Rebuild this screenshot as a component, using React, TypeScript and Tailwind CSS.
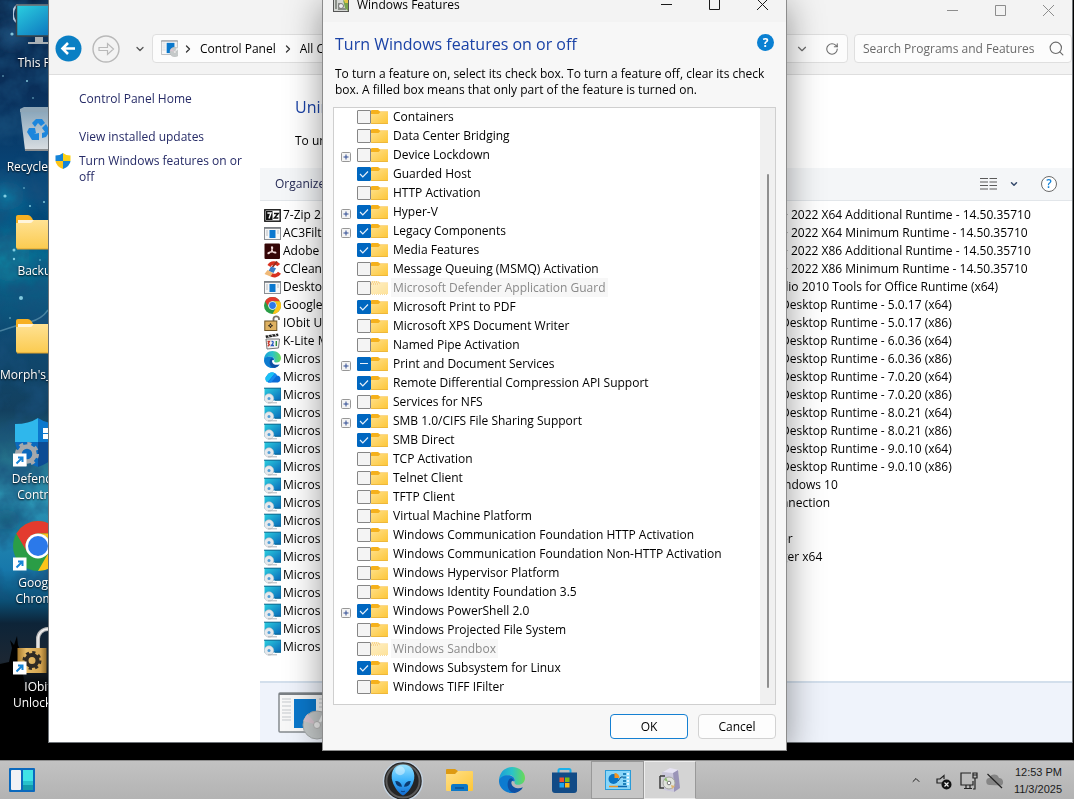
import { useEffect, useRef, type ReactNode } from "react";
import { ChevronDown, ChevronRight, ChevronUp, RotateCw, Search } from "lucide-react";

type State = "on" | "off" | "partial";
type Feature = { name: string; state: State; expandable?: boolean; disabled?: boolean };

const features: Feature[] = [
  { name: "Containers", state: "off" },
  { name: "Data Center Bridging", state: "off" },
  { name: "Device Lockdown", state: "off", expandable: true },
  { name: "Guarded Host", state: "on" },
  { name: "HTTP Activation", state: "off" },
  { name: "Hyper-V", state: "on", expandable: true },
  { name: "Legacy Components", state: "on", expandable: true },
  { name: "Media Features", state: "on" },
  { name: "Message Queuing (MSMQ) Activation", state: "off" },
  { name: "Microsoft Defender Application Guard", state: "off", disabled: true },
  { name: "Microsoft Print to PDF", state: "on" },
  { name: "Microsoft XPS Document Writer", state: "off" },
  { name: "Named Pipe Activation", state: "off" },
  { name: "Print and Document Services", state: "partial", expandable: true },
  { name: "Remote Differential Compression API Support", state: "on" },
  { name: "Services for NFS", state: "off", expandable: true },
  { name: "SMB 1.0/CIFS File Sharing Support", state: "on", expandable: true },
  { name: "SMB Direct", state: "on" },
  { name: "TCP Activation", state: "off" },
  { name: "Telnet Client", state: "off" },
  { name: "TFTP Client", state: "off" },
  { name: "Virtual Machine Platform", state: "off" },
  { name: "Windows Communication Foundation HTTP Activation", state: "off" },
  { name: "Windows Communication Foundation Non-HTTP Activation", state: "off" },
  { name: "Windows Hypervisor Platform", state: "off" },
  { name: "Windows Identity Foundation 3.5", state: "off" },
  { name: "Windows PowerShell 2.0", state: "on", expandable: true },
  { name: "Windows Projected File System", state: "off" },
  { name: "Windows Sandbox", state: "off", disabled: true },
  { name: "Windows Subsystem for Linux", state: "on" },
  { name: "Windows TIFF IFilter", state: "off" },
];

/* ---------- program icons (17 x 17) ---------- */

function ProgramIcon({ kind }: { kind: string }) {
  return (
    <svg viewBox="0 0 17 17" className="size-[17px] shrink-0" aria-hidden="true">
      {kind === "zip" && (
        <>
          <rect x="0.8" y="2.8" width="15.4" height="11.4" fill="#fff" stroke="#111" strokeWidth="1.4" />
          <rect x="2" y="4" width="6.5" height="9" fill="#111" />
          <path d="M3.4 6h3.6l-2 5.4" fill="none" stroke="#fff" strokeWidth="1.4" />
          <path d="M10 6.4h4.2L10.4 11h4" fill="none" stroke="#111" strokeWidth="1.5" />
        </>
      )}
      {kind === "window" && (
        <>
          <rect x="0.5" y="2.5" width="16" height="12" fill="#f6f6f6" stroke="#8b8f94" />
          <path d="M0 3h17" stroke="#777b80" strokeWidth="1.6" />
          <rect x="5.5" y="5" width="6" height="8" fill="#0b78cf" />
          <path d="M2 6h2M2 8h2M2 10h2M13 6h2M13 8h2" stroke="#b9bdc2" />
        </>
      )}
      {kind === "acrobat" && (
        <>
          <rect x="0.5" y="0.5" width="15.5" height="15.5" rx="1" fill="#350607" />
          <path d="M7.500 4q1.500-.8 1 1.500-.5 3-3.500 5-1.500.5-.8-.8Q6 8.500 11 9q1.800.8 0 1-3-.5-3.500-6z" fill="none" stroke="#f3dcdc" strokeWidth="1.200" />
        </>
      )}
      {kind === "cleaner" && (
        <>
          <path d="M14.800 4.200A6 6 0 0 0 5 5M15.500 11.800A6 6 0 0 1 7 13.500" fill="none" stroke="#d8311f" strokeWidth="3.600" />
          <path d="M13 0.500 8.500 6" stroke="#8f2f22" strokeWidth="1.800" />
          <path d="M7 5.500l5 1.800-2.500 4.700-5-2z" fill="#3b7cc4" />
          <path d="M3.500 9l5.500 3-2.500 3.500L0.500 13z" fill="#f0b978" />
        </>
      )}
      {kind === "chrome" && <ChromeShapes scale={0.34} />}
      {kind === "lock" && (
        <>
          <path d="M9.500 6V3.500a2.800 2.500 0 0 1 5.500 0V5" fill="none" stroke="#77736b" strokeWidth="1.800" />
          <rect x="0.800" y="6" width="12" height="9.500" fill="#deb161" stroke="#6d5426" />
          <path d="M6.500 8.300v4.600M4.200 10.600h4.600" stroke="#3f3526" strokeWidth="1.200" />
          <circle cx="6.500" cy="10.600" r="1.500" fill="#3f3526" />
          <circle cx="6.500" cy="10.600" r=".7" fill="#deb161" />
        </>
      )}
      {kind === "klite" && (
        <>
          <path d="M1.500 2.500 14 0.500l.5 2.500L2 5z" fill="#222" />
          <path d="M4 2.200l1.300 2M7.500 1.600l1.300 2M11 1l1.300 2" stroke="#fff" />
          <path d="M2 6h13.500l-1 9L3 16z" fill="#f2f2f2" stroke="#777" />
          <path d="M3.500 8.500h2l-1.200 2 1.200 1.200-1.800 1.600" fill="none" stroke="#c8372b" strokeWidth="1.300" />
          <path d="M7.500 8.500c2.500-.6 2 1.500 0 4h2.500" fill="none" stroke="#2a5cc0" strokeWidth="1.300" />
          <path d="M12.300 8v5" stroke="#2f8b3c" strokeWidth="1.400" />
        </>
      )}
      {kind === "edge" && <EdgeShapes scale={0.34} />}
      {kind === "cloud" && (
        <>
          <path d="M4.500 13.500A4 4 0 0 1 3 6.500 5.600 5.600 0 0 1 13 6.500a3.600 3.600 0 0 1 1 7z" fill="#0c6bd6" />
          <path d="M3 6.500A5.600 5.600 0 0 1 11 4.200L3.500 13.300A4 4 0 0 1 3 6.500z" fill="#1ac0f5" />
          <path d="M11 4.200a5 5 0 0 1 2 2.300L7 13.500H4z" fill="#168af0" />
        </>
      )}
      {kind === "setup" && (
        <>
          <rect x="0.500" y="1" width="16.500" height="12.500" fill="url(#screenBlue)" />
          <path d="M0 1.200h17v12h-6" fill="none" stroke="#12698f" />
          <circle cx="5" cy="11.500" r="4.700" fill="#e6e9ec" stroke="#b7bfc6" strokeWidth=".6" />
          <path d="M4 15.800h9" stroke="#aeb3b8" />
          <circle cx="5" cy="11.500" r="1.500" fill="#4f9fd8" />
        </>
      )}
    </svg>
  );
}

function ChromeShapes({ scale }: { scale: number }) {
  return (
    <g transform={`scale(${scale})`}>
      <circle cx="25" cy="25" r="25" fill="#2a9d46" />
      <path d="M25 0a25 25 0 0 1 21.700 12.500H25A12.500 12.500 0 0 0 14.200 31.200L3.300 12.500A25 25 0 0 1 25 0z" fill="#e33b2e" />
      <path d="M46.700 12.500A25 25 0 0 1 25 50L35.800 31.200A12.500 12.500 0 0 0 25 12.500z" fill="#fcc419" />
      <circle cx="25" cy="25" r="12.500" fill="#fff" />
      <circle cx="25" cy="25" r="10" fill="#2b79ea" />
    </g>
  );
}

function EdgeShapes({ scale }: { scale: number }) {
  return (
    <g transform={`scale(${scale})`}>
      <path d="M25 0C40 0 50 10 50 21c0 8-6 13-13 13-5 0-8-2-7-5 3-7-3-13-11-13C9 16 2 22 0 29 -1 12 10 0 25 0z" fill="url(#edgeTop)" />
      <path d="M0 27C1 20 9 15 18 16c8 0 14 6 12 12-7-4-13 2-11 9 2 8 12 12 24 5-5 6-12 8-18 8C9 50 0 38 0 27z" fill="#0c7bd0" />
      <path d="M20 23c-7 9-3 26 10 27 7-1 13-5 16-11-9 4-20 1-22-7-1-4 1-6 4-7-2-4-6-4-8-2z" fill="#0d50a4" />
    </g>
  );
}

/* ---------- desktop icons (50 x 50) ---------- */

function ShortcutArrow() {
  return (
    <g>
      <rect x="0" y="36.500" width="13.500" height="13" fill="#fff" />
      <path d="M3.500 46.500 9 41M5 40.500h4.500V45" fill="none" stroke="#1684d6" strokeWidth="2" />
    </g>
  );
}

function FolderShapes() {
  return (
    <>
      <path d="M3 6a2 2 0 0 1 2-2h10q2 0 4 3l1 2h28v10H3z" fill="#f7b022" />
      <rect x="5" y="9" width="20" height="6" fill="#fff5dc" />
      <path d="M3 12h14q2 0 3-2l1-1h27v28a2 2 0 0 1-2 1H5a2 2 0 0 1-2-2z" fill="url(#folder)" />
      <path d="M4 38h43" stroke="#dfa22f" />
    </>
  );
}

const desktopItems: { label: string[]; art: ReactNode }[] = [
  {
    label: ["This PC"],
    art: (
      <>
        <path d="M5 4a9 10 0 0 0 0 18" fill="none" stroke="#b5c9df" strokeWidth="2" />
        <rect x="3.500" y="4" width="46" height="31" fill="url(#screenBlue)" stroke="#3a4249" strokeWidth="1.500" />
        <path d="M3 4h47" stroke="#8e989f" />
        <path d="M22 36h8v5h-8zM15 41h23v2H15z" fill="#a9b0b5" />
      </>
    ),
  },
  {
    label: ["Recycle Bin"],
    art: (
      <>
        <path d="M7 4h37l-3 41H12z" fill="url(#bin)" />
        <path d="M7 4 11 2h31l3 2-1 3H7z" fill="#8fa6b7" />
        <path d="M12 45h29" stroke="#8c8f91" strokeWidth="2" />
        <g fill="#1d86dc">
          <path d="M19 18l4-4h6l3 4-4 3-3-3-3 4z" />
          <path d="M33 19l4 7-4 6-4 1v-5l3-1-3-4z" />
          <path d="M26 28v7h-7l-5-8 2-4 6 0 1 5-2 1z" />
        </g>
      </>
    ),
  },
  { label: ["Backup"], art: <g transform="translate(0 2)"><FolderShapes /></g> },
  { label: ["Morph's_Files"], art: <g transform="translate(0 2)"><FolderShapes /></g> },
  {
    label: ["Defender", "Control"],
    art: (
      <>
        <path d="M2 7Q16 7 25 1V25H2z" fill="#2fb7ec" />
        <path d="M25 1q9 6 23 6v18H25z" fill="#0c78cd" />
        <path d="M2 25h23v25Q5 43 2 25z" fill="#0b69bd" />
        <path d="M25 25h23q-3 18-23 25z" fill="#0d4c94" />
        <path d="M30 11h5v5h-5zM36 11h6v5h-6zM30 17h5v5h-5zM36 17h6v5h-6z" fill="#fff" />
        <circle cx="14" cy="37" r="7.500" fill="none" stroke="#a5a8ab" strokeWidth="4.500" />
        <circle cx="14" cy="37" r="10.500" fill="none" stroke="#a5a8ab" strokeWidth="3" strokeDasharray="4.120 4.120" />
        <ShortcutArrow />
      </>
    ),
  },
  { label: ["Google", "Chrome"], art: <><ChromeShapes scale={1} /><ShortcutArrow /></> },
  {
    label: ["IObit", "Unlocker"],
    art: (
      <>
        <path d="M25 24V14a10 10 0 0 1 20 0v6" fill="none" stroke="#b9b9b9" strokeWidth="4" />
        <path d="M25 24V14a10 10 0 0 1 20 0" fill="none" stroke="#f0f0f0" strokeWidth="1.500" />
        <rect x="4.500" y="23" width="29" height="25" fill="url(#brass)" />
        <circle cx="19" cy="35.500" r="5.500" fill="none" stroke="#2f2a24" strokeWidth="4" />
        <circle cx="19" cy="35.500" r="8" fill="none" stroke="#2f2a24" strokeWidth="3" strokeDasharray="3.140 3.140" />
        <ShortcutArrow />
      </>
    ),
  },
];

function Gradients() {
  return (
    <svg className="absolute size-0" aria-hidden="true">
      <defs>
        <linearGradient id="screenBlue" x1="0" y1="0" x2="1" y2="1">
          <stop offset="0" stopColor="#2bd0e0" /><stop offset="1" stopColor="#0866b8" />
        </linearGradient>
        <linearGradient id="folder" x1="0" y1="0" x2="0" y2="1">
          <stop offset="0" stopColor="#ffe294" /><stop offset="1" stopColor="#fbcb50" />
        </linearGradient>
        <linearGradient id="smallFolder" x1="0" y1="0" x2="1" y2="1">
          <stop offset="0" stopColor="#ffe08a" /><stop offset="1" stopColor="#fdc637" />
        </linearGradient>
        <linearGradient id="bin" x1="0" y1="0" x2="0" y2="1">
          <stop offset="0" stopColor="#86a3b8" /><stop offset="1" stopColor="#d9dee2" />
        </linearGradient>
        <linearGradient id="brass" x1="0" y1="0" x2="1" y2="0">
          <stop offset="0" stopColor="#a6792c" /><stop offset=".3" stopColor="#e8bd69" /><stop offset=".8" stopColor="#d3a350" /><stop offset="1" stopColor="#8e6a2a" />
        </linearGradient>
        <linearGradient id="edgeTop" x1="0" y1="0" x2="1" y2="0">
          <stop offset="0" stopColor="#1a9fd8" /><stop offset=".5" stopColor="#2bc3c8" /><stop offset="1" stopColor="#6ada55" />
        </linearGradient>
        <linearGradient id="alien" x1="0" y1="0" x2="0" y2="1">
          <stop offset="0" stopColor="#9be4ff" /><stop offset=".5" stopColor="#3fb4fb" /><stop offset="1" stopColor="#1169cf" />
        </linearGradient>
      </defs>
    </svg>
  );
}

function Wallpaper() {
  const stars = [
    [5, 196, 1.600], [14, 250, 1.500], [14, 259, 1.200], [21, 298, 2], [3, 76, 0.800], [27, 81, 1], [40, 260, 0.800], [24, 188, 0.800],
    [20, 272, 0.800], [33, 98, 0.800], [30, 206, 1], [44, 202, 1], [10, 318, 0.800], [12, 34, 1.600],
  ];
  return (
    <svg className="absolute inset-y-0 left-0 h-full w-12" viewBox="0 0 48 760" preserveAspectRatio="none" aria-hidden="true">
      <defs>
        <linearGradient id="sky" x1="0" y1="0" x2="0" y2="1">
          <stop offset="0" stopColor="#0a2447" /><stop offset=".12" stopColor="#0a2f5a" /><stop offset=".25" stopColor="#074a7d" />
          <stop offset=".34" stopColor="#086c92" /><stop offset=".44" stopColor="#0e4a72" /><stop offset=".54" stopColor="#13405f" />
          <stop offset=".6" stopColor="#246f88" /><stop offset=".66" stopColor="#2b92b2" /><stop offset=".75" stopColor="#1778ab" />
          <stop offset=".79" stopColor="#0b5076" /><stop offset=".82" stopColor="#0d2438" /><stop offset=".87" stopColor="#1c2733" /><stop offset=".91" stopColor="#000" />
        </linearGradient>
        <filter id="soft"><feGaussianBlur stdDeviation="7" /></filter>
        <filter id="clouds" x="0" y="0" width="1" height="1">
          <feTurbulence type="fractalNoise" baseFrequency="0.035" numOctaves="4" seed="8" />
          <feColorMatrix values="0 0 0 0 0.010  0 0 0 0 0.080  0 0 0 0 0.200  2.400 0 0 0 -0.850" />
        </filter>
      </defs>
      <rect width="48" height="760" fill="url(#sky)" />
      <g filter="url(#soft)">
        <ellipse cx="12" cy="36" rx="12" ry="10" fill="#2e6c9c" opacity=".7" />
        <ellipse cx="6" cy="196" rx="18" ry="14" fill="#1682a6" opacity=".7" />
        <ellipse cx="10" cy="258" rx="20" ry="24" fill="#0f8fa6" opacity=".6" />
        <ellipse cx="40" cy="225" rx="14" ry="16" fill="#063a6c" opacity=".7" />
        <ellipse cx="6" cy="520" rx="14" ry="10" fill="#12506b" opacity=".8" />
      </g>
      <rect width="48" height="600" filter="url(#clouds)" opacity=".7" />
      <path d="M0 331q18-6 30-9t18-12" stroke="#6fa5bd" strokeWidth="1.500" fill="none" opacity=".6" />
      {stars.map(([x, y, r]) => <circle key={`${x}-${y}`} cx={x} cy={y} r={r} fill="#9fe6f5" opacity=".8" />)}
      <path d="M0 664l9-2 3-14-2-8 4 5 3-9 1 9 2 5-3 16q10 8 6 26l24 12v70H0z" fill="#000" />
    </svg>
  );
}

/* ---------- dialog ---------- */

function SmallFolder({ faded }: { faded?: boolean }) {
  return (
    <svg viewBox="0 0 17 14" className={faded ? "h-3.5 w-[17px] opacity-50" : "h-3.5 w-[17px]"} aria-hidden="true">
      <path d="M0 1q0-1 1-1h6l2 1.500H17V6H0z" fill="#f5b11c" />
      <path d="M0 4h7.500l2-2H17v11q0 .8-1 .8H1q-1 0-1-.8z" fill="url(#smallFolder)" />
      <path d="M0 13.500h17" stroke="#e9ae2c" strokeWidth=".8" />
      {faded && <path d="M0 1h8M1 3h8M0 13.500h17" stroke="#fff" strokeDasharray="1 1" />}
    </svg>
  );
}

function FeatureRow({ feature }: { feature: Feature }) {
  const box = useRef<HTMLInputElement>(null);
  useEffect(() => {
    if (box.current) box.current.indeterminate = feature.state === "partial";
  }, [feature.state]);
  return (
    <li className="flex h-[19px] items-center">
      <span className="flex w-[23px] shrink-0 items-center pt-1 pl-[7px]">
        {feature.expandable && (
          <button type="button" aria-label={`Expand ${feature.name}`} className="size-2.5">
            <svg viewBox="0 0 10 10" className="size-2.5" aria-hidden="true">
              <rect x=".5" y=".5" width="9" height="9" rx="1" fill="#f4f4f4" stroke="#979797" />
              <path d="M2.500 5h5M5 2.500v5" stroke="#2f4a92" />
            </svg>
          </button>
        )}
      </span>
      <label className="flex h-full items-center">
        <span className="grid size-3.5">
          <input
            ref={box}
            type="checkbox"
            defaultChecked={feature.state === "on"}
            disabled={feature.disabled}
            className="peer col-start-1 row-start-1 size-3.5 appearance-none rounded-[1px] border border-[#868686] bg-[#f4f4f4] checked:border-[#0067c0] checked:bg-[#0067c0] indeterminate:border-[#0067c0] indeterminate:bg-[#0067c0]"
          />
          <svg viewBox="0 0 14 14" className="pointer-events-none col-start-1 row-start-1 hidden size-3.5 peer-checked:block" aria-hidden="true">
            <path d="M3 7l2.800 2.800L11 4.500" fill="none" stroke="#e6f0fa" strokeWidth="1.200" />
          </svg>
          <svg viewBox="0 0 14 14" className="pointer-events-none col-start-1 row-start-1 hidden size-3.5 peer-indeterminate:block" aria-hidden="true">
            <path d="M3 6.500h8" stroke="#e6f0fa" />
          </svg>
        </span>
        <SmallFolder faded={feature.disabled} />
        <span className={feature.disabled ? "ml-[3px] bg-[#f7f7f7] px-0.5 leading-[19px] whitespace-nowrap text-[#8a8a8a]" : "ml-[3px] px-0.5 leading-[19px] whitespace-nowrap"}>
          {feature.name}
        </span>
      </label>
    </li>
  );
}

function CaptionButtons({ className }: { className: string }) {
  const shapes = [
    { label: "Minimize", d: "M0 6.500h11" },
    { label: "Maximize", d: "M.5 1.500h10v10H.5z" },
    { label: "Close", d: "M0 1l11 11M11 1L0 12" },
  ];
  return (
    <div className={className}>
      {shapes.map((s) => (
        <button key={s.label} type="button" aria-label={s.label} className="flex w-12 items-center justify-center">
          <svg viewBox="0 0 11 13" className="h-[13px] w-[11px]" fill="none" stroke="currentColor" aria-hidden="true">
            <path d={s.d} />
          </svg>
        </button>
      ))}
    </div>
  );
}

function FeaturesDialog() {
  return (
    <section
      role="dialog"
      aria-labelledby="dialog-title"
      className="absolute top-0 bottom-[9px] left-[322px] flex w-[465px] flex-col overflow-hidden border-x border-b border-[#8c8c8c] bg-[#f7f7f7] shadow-[0_4px_34px_rgba(0,0,0,0.42)]"
    >
      <header className="flex h-[22px] shrink-0 items-start bg-[#f3f3f3] pl-2.5">
        <svg viewBox="0 0 16 12" className="h-3 w-4" aria-hidden="true">
          <rect x=".5" y="-2" width="15" height="13.500" fill="#d5d7d4" stroke="#555" />
          <path d="M3 0v9M6 3v6M5 9h8" stroke="#8a8f88" strokeWidth="2" />
          <path d="M10 0l5 3v8l-3-3z" fill="#78a34c" />
          <path d="M11 0h4v3h-3z" fill="#e2c542" />
          <circle cx="8" cy="6" r="2.500" fill="#eee" stroke="#777" />
        </svg>
        <h1 id="dialog-title" className="ml-2 leading-[9px]">Windows Features</h1>
        <CaptionButtons className="ml-auto flex h-2 items-center text-[#1a1a1a]" />
      </header>
      <div className="flex min-h-0 flex-1 flex-col px-[10px]">
        <div className="flex items-start justify-between pt-3">
          <h2 className="pl-0.5 text-[16px] leading-5 text-[#1a42a6]">Turn Windows features on or off</h2>
          <button type="button" aria-label="Help" className="mr-0.5 flex size-[17px] items-center justify-center rounded-full bg-[#0a80d2] text-[12px] font-bold text-white">?</button>
        </div>
        <p className="mt-3 pl-0.5 leading-4">
          To turn a feature on, select its check box. To turn a feature off, clear its check<br />box. A filled box means that only part of the feature is turned on.
        </p>
        <div className="mt-[9px] flex min-h-0 flex-1 border border-[#cfcfcf] bg-white">
          <ul className="-mt-px min-w-0 flex-1 overflow-hidden">
            {features.map((f) => <FeatureRow key={f.name} feature={f} />)}
          </ul>
          <div className="flex w-[15px] justify-center bg-[#f0f0f0] pt-[66px] pb-4">
            <div className="w-0.5 rounded-full bg-[#8f8f8f]" />
          </div>
        </div>
        <div className="flex justify-end gap-2.5 pt-[9px] pb-[11px]">
          <button type="button" className="h-[25px] w-[78px] rounded border border-[#1580d2] bg-[#fdfdfd]">OK</button>
          <button type="button" className="h-[25px] w-[78px] rounded border border-[#d2d2d2] bg-[#fdfdfd]">Cancel</button>
        </div>
      </div>
    </section>
  );
}

/* ---------- programs window ---------- */

const leftPrograms: [string, string][] = [
  ["zip", "7-Zip 25"], ["window", "AC3Filter"], ["acrobat", "Adobe"], ["cleaner", "CCleaner"], ["window", "Desktop"],
  ["chrome", "Google"], ["lock", "IObit Un"], ["klite", "K-Lite M"], ["edge", "Micros"], ["cloud", "Micros"],
  ...Array.from({ length: 15 }, (): [string, string] => ["setup", "Micros"]),
];

const rightPrograms = [
  "+ 2022 X64 Additional Runtime - 14.50.35710",
  "+ 2022 X64 Minimum Runtime - 14.50.35710",
  "+ 2022 X86 Additional Runtime - 14.50.35710",
  "+ 2022 X86 Minimum Runtime - 14.50.35710",
  "dio 2010 Tools for Office Runtime (x64)",
  "Desktop Runtime - 5.0.17 (x64)",
  "Desktop Runtime - 5.0.17 (x86)",
  "Desktop Runtime - 6.0.36 (x64)",
  "Desktop Runtime - 6.0.36 (x86)",
  "Desktop Runtime - 7.0.20 (x64)",
  "Desktop Runtime - 7.0.20 (x86)",
  "Desktop Runtime - 8.0.21 (x64)",
  "Desktop Runtime - 8.0.21 (x86)",
  "Desktop Runtime - 9.0.10 (x64)",
  "Desktop Runtime - 9.0.10 (x86)",
  "indows 10",
  "nnection",
  "",
  "er",
  "ger x64",
];

function SetupIcon({ className }: { className: string }) {
  return (
    <svg viewBox="0 0 48 48" className={className} aria-hidden="true">
      <rect x="1" y="2" width="46" height="39" rx="1" fill="#f8f8f8" stroke="#858a8f" strokeWidth="1.500" />
      <path d="M1 3h46" stroke="#7b8085" strokeWidth="2" />
      <rect x="16" y="8" width="22" height="29" fill="#0a78cc" />
      <path d="M4 8h9M4 11h9M4 15h9M4 19h9M4 22h9M4 26h9M4 29h9M41 8h4M41 12h4M41 16h4" stroke="#c5c9cd" />
      <circle cx="39" cy="34" r="14" fill="#c5c9c9" stroke="#a8acad" />
      <path d="M39 34 25.500 30a14 14 0 0 1 4-7z" fill="#d9c6d0" />
      <path d="M39 34l6-12.500a14 14 0 0 1 5 4z" fill="#f2f4f4" />
      <circle cx="39" cy="34" r="3.500" fill="#eee" stroke="#b5b5b5" />
    </svg>
  );
}

function ProgramsWindow() {
  return (
    <section aria-label="Programs and Features" className="absolute top-0 right-px bottom-[17px] left-12 flex flex-col overflow-hidden border-x border-b border-[#6f7478] bg-white">
      <header className="h-[75px] shrink-0 border-b border-[#dedede] bg-[#f3f3f3]">
        <CaptionButtons className="flex h-[34px] justify-end pb-3.5 text-[#8d8d8d]" />
        <nav className="flex h-[29px] items-center pl-1.5">
          <button type="button" aria-label="Back" className="mr-2.5">
            <svg viewBox="0 0 27 27" className="size-[27px]" aria-hidden="true">
              <circle cx="13.500" cy="13.500" r="13" fill="#0a7fc4" />
              <path d="M20 13.500H8M13 8l-5.500 5.500L13 19" fill="none" stroke="#fff" strokeWidth="2.600" />
            </svg>
          </button>
          <button type="button" aria-label="Forward" className="mr-3.5">
            <svg viewBox="0 0 28 28" className="size-7" fill="none" stroke="#b9b9b9" aria-hidden="true">
              <circle cx="14" cy="14" r="13" strokeWidth="1.400" />
              <path d="M7 12.500h8.500V8.500L21.500 14l-6 5.500v-4H7z" strokeWidth="1.200" />
            </svg>
          </button>
          <button type="button" aria-label="Recent locations" className="mr-1.5"><ChevronDown className="size-3 text-[#555]" strokeWidth={2.6} /></button>
          <div className="flex h-[29px] flex-1 items-center rounded border border-[#dfdfdf] bg-[#fcfcfc] px-2">
            <SetupIcon className="size-[17px]" />
            <ChevronRight className="ml-1 size-3 text-[#333]" strokeWidth={2.6} />
            <a href="#control-panel" className="ml-1.5">Control Panel</a>
            <ChevronRight className="mx-1.5 size-3 text-[#333]" strokeWidth={2.6} />
            <a href="#all-items">All C</a>
            <button type="button" aria-label="Previous locations" className="mr-4 ml-auto"><ChevronDown className="size-3.5 text-[#6b6b6b]" /></button>
            <button type="button" aria-label="Refresh"><RotateCw className="size-3.5 text-[#6b6b6b]" strokeWidth={1.8} /></button>
          </div>
          <div className="ml-1.5 flex h-[29px] w-[218px] items-center rounded border border-[#dfdfdf] bg-[#fcfcfc] pr-1.5 pl-2">
            <input type="search" aria-label="Search Programs and Features" placeholder="Search Programs and Features" className="min-w-0 flex-1 bg-transparent outline-none placeholder:text-[#6a6a6a]" />
            <Search className="size-[17px] text-[#6b6b6b]" strokeWidth={1.6} />
          </div>
        </nav>
      </header>
      <div className="flex min-h-0 flex-1">
        <aside className="w-[211px] shrink-0 pt-4 pl-[30px] leading-4 text-[#252a66]">
          <a href="#home" className="block">Control Panel Home</a>
          <a href="#updates" className="mt-[22px] block">View installed updates</a>
          <div className="mt-2 -ml-6 flex gap-2 pr-4">
            <svg viewBox="0 0 16 16" className="size-4 shrink-0" aria-hidden="true">
              <path d="M8 0v8H.5V2.500Q5 2.500 8 0z" fill="#1684d8" />
              <path d="M8 0q3 2.500 7.500 2.500V8H8z" fill="#fcd116" />
              <path d="M.5 8H8v8Q1 13 .5 8z" fill="#fcc419" />
              <path d="M8 8h7.500Q15 13 8 16z" fill="#1684d8" />
            </svg>
            <a href="#features">Turn Windows features on or off</a>
          </div>
        </aside>
        <main className="flex min-w-0 flex-1 flex-col">
          <div className="h-[93px] shrink-0 pt-[22px] pl-[35px] whitespace-nowrap">
            <h2 className="text-[16px] leading-5 text-[#1a42a6]">Unin</h2>
            <p className="mt-4 leading-4">To un</p>
          </div>
          <div className="flex h-[33px] shrink-0 items-center border-b border-[#e2e6ea] bg-[#f4f6f8] pl-[15px] text-[#252a55]">
            <button type="button">Organize</button>
            <button type="button" aria-label="Change your view" className="ml-auto flex items-center gap-3">
              <svg viewBox="0 0 17 12" className="h-3 w-[17px]" stroke="#5a5a5a" aria-hidden="true">
                <path d="M0 .5h8M9.500 .5h7.500M0 4h8M9.500 4h7.500M0 7.500h8M9.500 7.500h7.500M0 11h8M9.500 11h7.500" />
              </svg>
              <ChevronDown className="size-2.5 text-[#34496b]" strokeWidth={3.5} />
            </button>
            <button type="button" aria-label="Help" className="mr-[15px] ml-[22px] flex size-4 items-center justify-center rounded-full border border-[#6b6b6b] bg-white text-[12px] font-semibold text-[#1684d8]">?</button>
          </div>
          <div className="flex min-h-0 flex-1 pt-[5px] pl-1">
            <ul className="w-[517px] shrink-0 leading-[18px]">
              {leftPrograms.map(([kind, name], i) => (
                <li key={i} className="flex h-[18px] items-center gap-0.5"><ProgramIcon kind={kind} />{name}</li>
              ))}
            </ul>
            <ul className="leading-[18px] whitespace-nowrap">
              {rightPrograms.map((name, i) => <li key={i} className="h-[18px]">{name}</li>)}
            </ul>
          </div>
          <footer className="h-[61px] shrink-0 overflow-hidden border-t-2 border-[#d3dfec] bg-[#eff3fb] pt-2 pl-[18px]">
            <SetupIcon className="size-[48px] overflow-visible" />
          </footer>
        </main>
      </div>
    </section>
  );
}

/* ---------- taskbar ---------- */

function Taskbar() {
  return (
    <footer className="flex h-[39px] shrink-0 items-center border-t border-[#8e8e8e] bg-linear-to-b from-[#c2c2c2] to-[#b3b3b3] text-[#1c1c1c]">
      <div className="flex-1 pl-[9px]">
        <button type="button" aria-label="Widgets" className="flex">
          <svg viewBox="0 0 26 24" className="h-6 w-[26px]" aria-hidden="true">
            <rect width="26" height="24" rx="1" fill="#0b69bd" />
            <rect x="2" y="2" width="10" height="20" rx="1" fill="#f2f2f5" />
            <path d="M14 2h10v11H14z" fill="#3fe3e6" /><path d="M14 13h10v4H14z" fill="#27c2cb" /><path d="M14 17h10v5H14z" fill="#149aaa" />
          </svg>
        </button>
      </div>
      <div className="flex h-full items-center pl-[7px]">
        <button type="button" aria-label="Start" className="mr-[22px]">
          <svg viewBox="0 0 42 39" className="h-[38px] w-[42px]" aria-hidden="true">
            <circle cx="21" cy="20.500" r="20" fill="#252525" stroke="#c4d2e0" strokeWidth="1.500" />
            <circle cx="21" cy="20.500" r="17" fill="none" stroke="#5a5a5a" strokeWidth="2" />
            <path d="M21 3.500c8 0 12.500 6 11.500 14.500-1 7-6.500 15-11.500 17.500-5-2.500-10.500-10.500-11.500-17.500C8.500 9.500 13 3.500 21 3.500z" fill="url(#alien)" />
            <ellipse cx="18" cy="10" rx="5" ry="4.500" fill="#fff" opacity=".4" />
            <path d="M13 20.500q6 0 7 6-6 0-7-6zM29 20.500q-6 0-7 6 6 0 7-6z" fill="#0c3a70" />
            <path d="M19 31q2 1.200 4 0" stroke="#0c3f80" fill="none" />
          </svg>
        </button>
        <button type="button" aria-label="File Explorer" className="mr-[26px]">
          <svg viewBox="0 0 27 24" className="h-6 w-[27px]" aria-hidden="true">
            <path d="M0 2q0-1 1-1h8l3 2v4H0z" fill="#dd9a12" />
            <path d="M0 6h9l3-3h14q1 0 1 1v18q0 1-1 1H1q-1 0-1-1z" fill="url(#smallFolder)" />
            <path d="M5 23v-5q0-2 2-2h13q2 0 2 2v5z" fill="#0c78c8" /><path d="M9 20h9" stroke="#0a4f91" strokeWidth="1.500" />
          </svg>
        </button>
        <button type="button" aria-label="Microsoft Edge" className="mr-[27px]">
          <svg viewBox="0 0 26 26" className="size-[26px]" aria-hidden="true"><EdgeShapes scale={0.52} /></svg>
        </button>
        <button type="button" aria-label="Microsoft Store" className="mr-3.5">
          <svg viewBox="0 0 25 25" className="size-[25px]" aria-hidden="true">
            <path d="M6.500 6V2.500q0-1.500 1.500-1.500h9q1.500 0 1.500 1.500V6" fill="none" stroke="#1bb0ea" strokeWidth="2" />
            <path d="M0 4.500h25V22q0 3-3 3H3q-3 0-3-3z" fill="#124b86" />
            <path d="M7.500 9.500H12V14H7.500z" fill="#f2512a" /><path d="M13 9.500h4.500V14H13z" fill="#7cba12" />
            <path d="M7.500 15H12v4.500H7.500z" fill="#1aa5ee" /><path d="M13 15h4.500v4.500H13z" fill="#fdb913" />
          </svg>
        </button>
        <button type="button" aria-label="Control Panel" className="flex h-full w-[53px] items-center justify-center border border-[#999] bg-[#c6c6c6]">
          <svg viewBox="0 0 26 20" className="h-5 w-[26px]" aria-hidden="true">
            <rect x=".5" y=".5" width="25" height="19" fill="#8ad6f8" stroke="#2a9bd8" />
            <circle cx="8.500" cy="9" r="5" fill="#0a74c4" /><path d="M9.500 8V3a5 5 0 0 1 5 5z" fill="#f09321" />
            <path d="M13 11l3-4h2" stroke="#0d4d80" fill="none" />
            <path d="M18 4h3M18 7.500h3M18 11h3M18 14h3" stroke="#1d81bb" strokeWidth="1.800" />
            <path d="M22 4h2M22 7.500h2M22 11h2M22 14h2" stroke="#fff" strokeWidth="1.500" />
            <path d="M4 16.500h9" stroke="#f09321" strokeWidth="1.500" /><path d="M13 16.500h9" stroke="#0b66ad" strokeWidth="1.500" />
          </svg>
        </button>
        <button type="button" aria-label="Windows Features" className="flex h-full w-[52px] items-center justify-center border border-[#ededed] border-r-[#999] bg-[#d4d4d4]">
          <svg viewBox="0 0 24 25" className="h-[25px] w-6" aria-hidden="true">
            <path d="M5 4l7-4 9 2-6 4z" fill="#e6e3f3" /><path d="M15 5l5-3 2 18-6 4z" fill="#9a94b8" /><path d="M4 4l11 1 1 19-10-2z" fill="#cbc8dc" />
            <path d="M2 8v12h4M2 8h5" stroke="#3c3c3c" strokeWidth="1.500" fill="none" />
            <circle cx="11" cy="15" r="6" fill="#e0e2dc" stroke="#a5a7a1" /><circle cx="11" cy="15" r="1.800" fill="#fff" stroke="#777" />
            <path d="M6 12l4 2-2-5z" fill="#8fbd74" /><path d="M13 17l4 1-3 3z" fill="#dfb46e" />
          </svg>
        </button>
      </div>
      <div className="flex flex-1 items-center justify-end pr-3">
        <button type="button" aria-label="Show hidden icons"><ChevronUp className="size-3" strokeWidth={2} /></button>
        <svg viewBox="0 0 16 16" className="mt-1 ml-3.5 size-4" aria-hidden="true">
          <path d="M6 9H1V5h3l4-3.500V5" fill="none" stroke="#222" strokeWidth="1.200" />
          <circle cx="10.500" cy="10.500" r="5" fill="#111" /><path d="M8.500 8.500l4 4M12.500 8.500l-4 4" stroke="#eee" strokeWidth="1.200" />
        </svg>
        <svg viewBox="0 0 18 18" className="mt-0.5 ml-2 size-[18px]" fill="none" stroke="#222" strokeWidth="1.200" aria-hidden="true">
          <path d="M11 1H1v12h12V9M4 16.500h8M6 13v3.500M10 13v3.500M13 1h4v5h-4zM15 6v11h-2M13 3h4" />
        </svg>
        <svg viewBox="0 0 18 16" className="mt-0.5 ml-2 h-4 w-[18px]" aria-hidden="true">
          <path d="M4 12a3.500 3.500 0 0 1-.5-7A5 5 0 0 1 13 5a4 4 0 0 1 2 7.500z" fill="#858585" /><path d="M1.500 1l14.500 14" stroke="#222" strokeWidth="1.200" />
        </svg>
        <time dateTime="2025-11-03T12:53" className="mt-0.5 ml-2.5 text-right font-['Liberation_Sans',sans-serif] text-[11px] leading-[17px]">12:53 PM<br />11/3/2025</time>
      </div>
    </footer>
  );
}

export default function App() {
  return (
    <div className="flex h-screen flex-col overflow-hidden bg-black font-['Open_Sans','Noto_Sans',sans-serif] text-[12px] text-black">
      <Gradients />
      <div className="relative min-h-0 flex-1 overflow-hidden">
        <Wallpaper />
        <ul className="relative w-[76px]">
          {desktopItems.map((item) => (
            <li key={item.label[0]} className="flex h-[104px] flex-col items-center pt-px text-center leading-4 text-white [text-shadow:0_1px_2px_#000]">
              <svg viewBox="0 0 50 50" className="mb-1 size-[50px] shrink-0" aria-hidden="true">{item.art}</svg>
              {item.label.map((line) => <span key={line} className="whitespace-nowrap">{line}</span>)}
            </li>
          ))}
        </ul>
        <ProgramsWindow />
        <FeaturesDialog />
      </div>
      <Taskbar />
    </div>
  );
}
